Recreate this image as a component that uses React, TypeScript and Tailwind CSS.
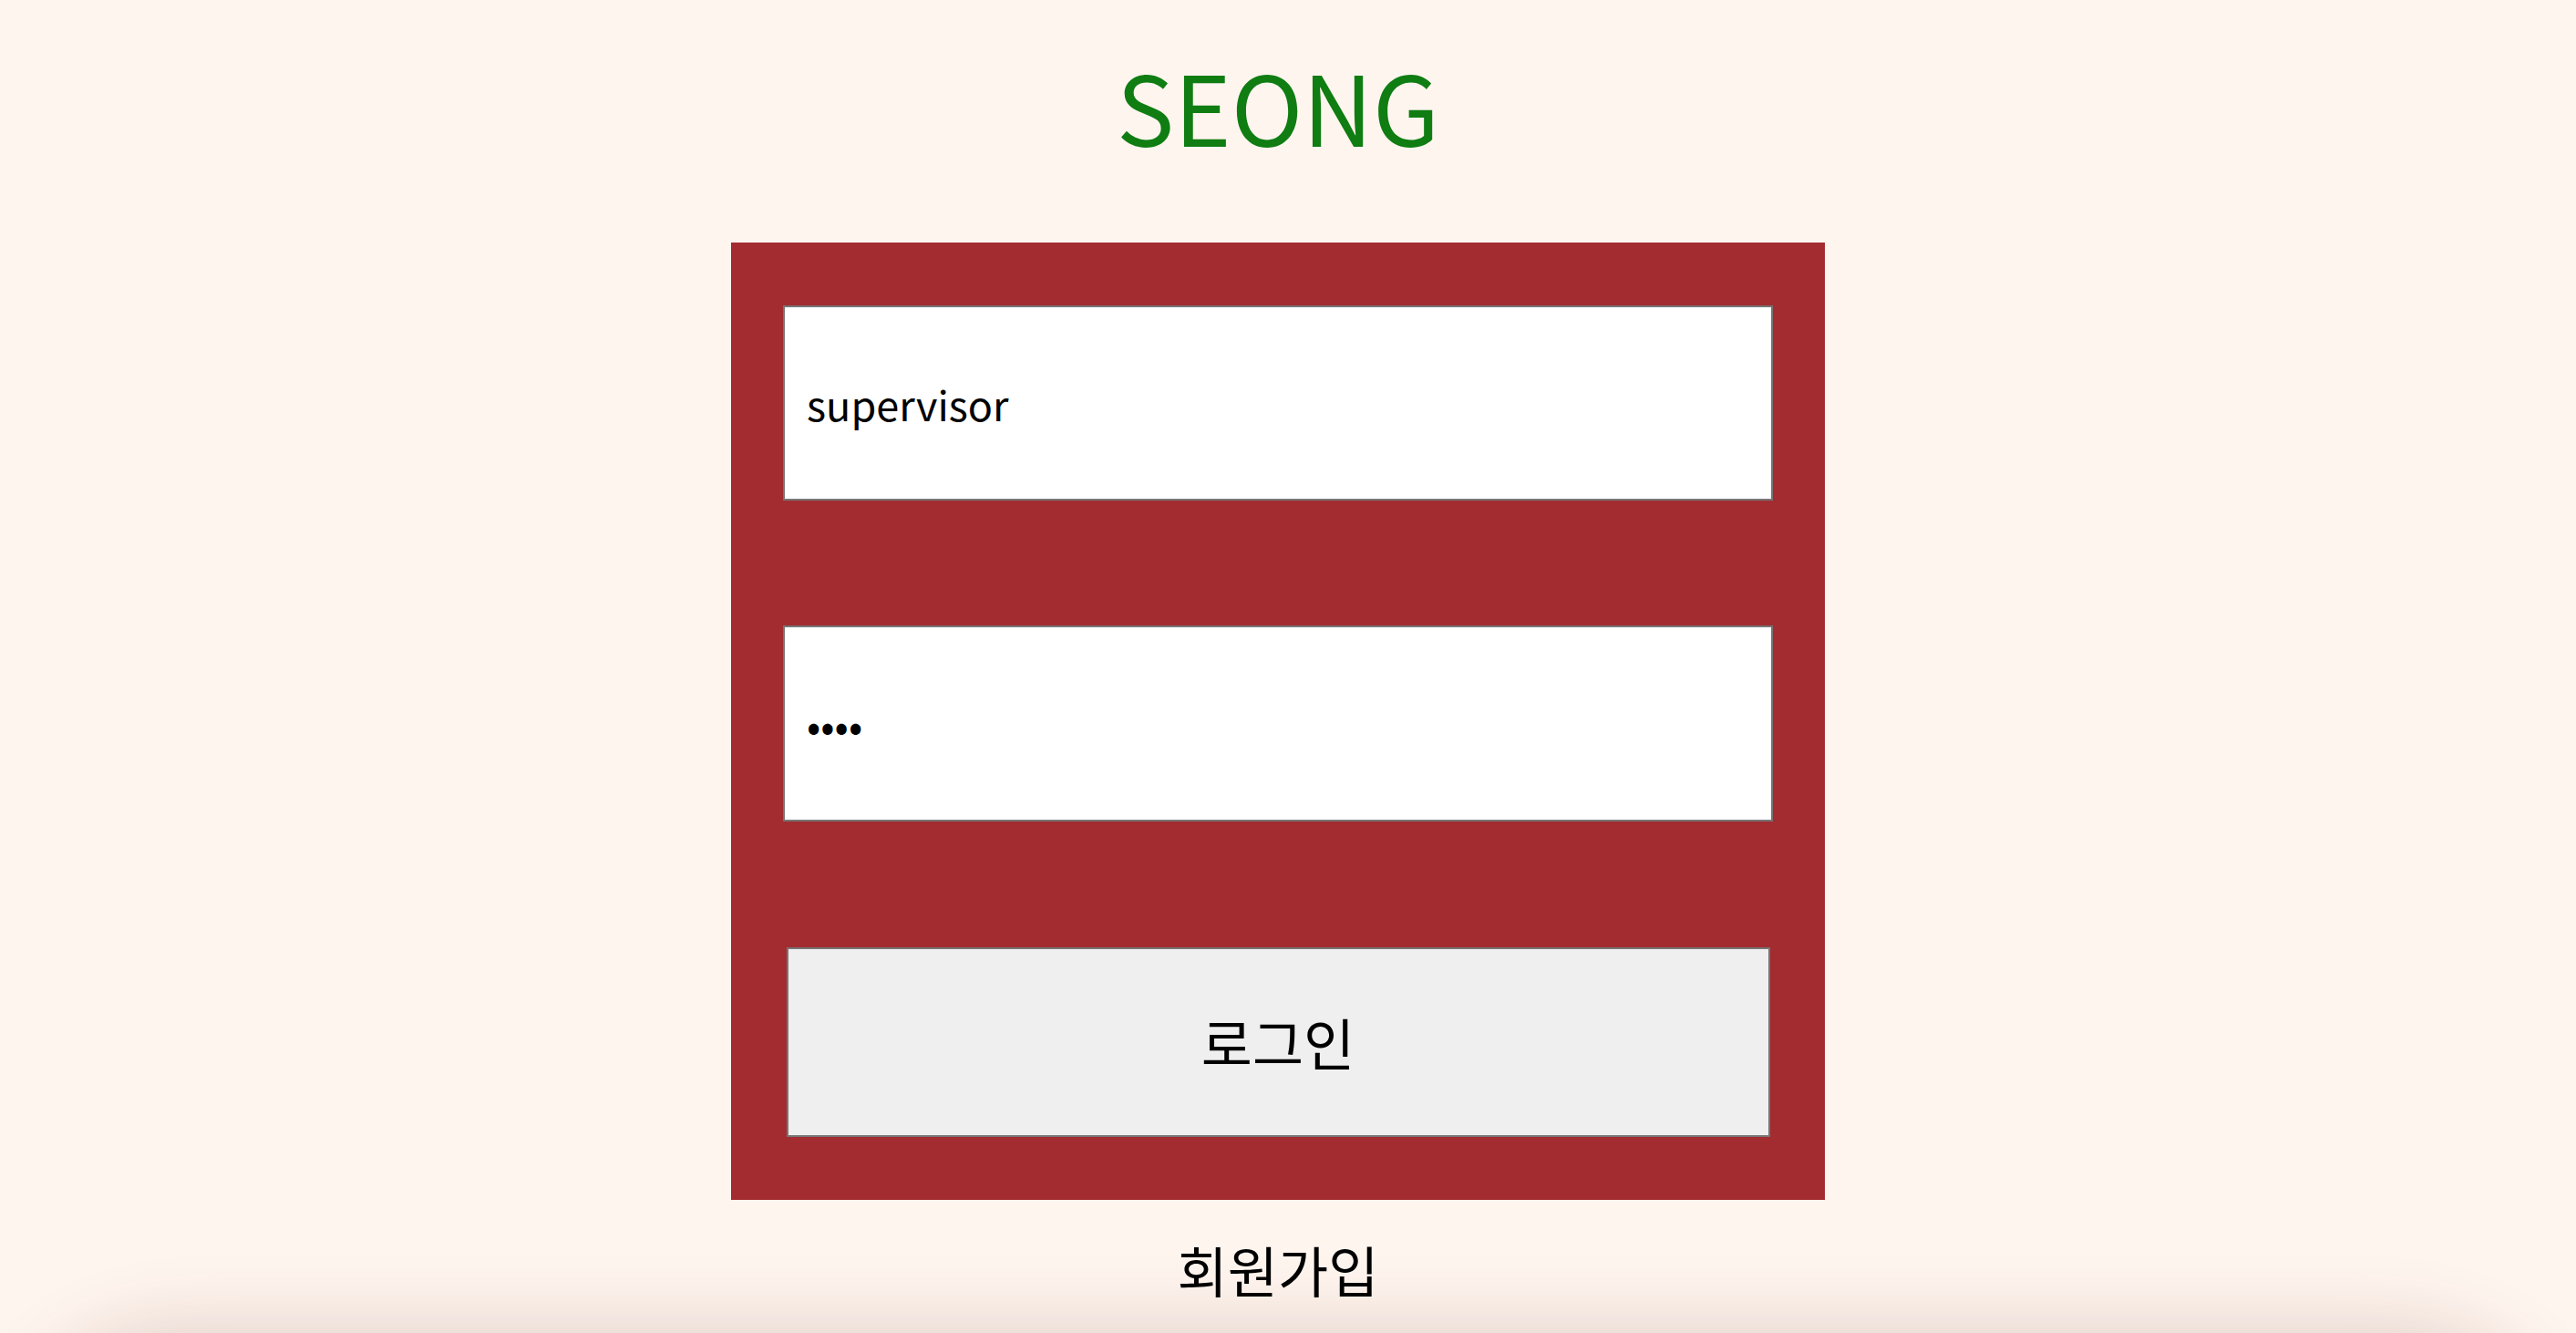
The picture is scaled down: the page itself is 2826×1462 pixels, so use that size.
import React from 'react'

export default function App() {
  return (
    <div
      className="relative min-h-screen overflow-hidden bg-[#fff5ef] pr-[22px]"
      style={{ fontFamily: '"Noto Sans CJK KR", "Noto Sans", sans-serif' }}
    >
      <div className="flex flex-col items-center">
        {/* Title */}
        <h1 className="mt-[62px] text-[106px] leading-none font-normal text-[#0f7d12]">SEONG</h1>

        {/* Login box */}
        <form className="mt-[98px] flex w-[1200px] flex-col items-center bg-[#a22c30] py-[69px]">
          <input
            type="text"
            readOnly
            defaultValue="supervisor"
            className="h-[214px] w-[1086px] border-2 border-[#767676] bg-white pl-[24px] text-[45px] text-black outline-none"
          />
          <input
            type="password"
            readOnly
            defaultValue="1234"
            className="mt-[137px] h-[215px] w-[1086px] border-2 border-[#767676] bg-white pl-[24px] text-[45px] text-black outline-none"
          />
          <button
            type="button"
            className="mt-[138px] h-[208px] w-[1079px] border-2 border-[#767676] bg-[#efefef] text-[61px] text-black"
          >
            로그인
          </button>
        </form>

        {/* Sign up link */}
        <a className="mt-[46px] text-[60px] leading-none text-black">회원가입</a>
      </div>

      {/* Bottom shadow from the element below the fold */}
      <div className="pointer-events-none absolute left-0 right-0 top-full h-[400px] rounded-[200px] shadow-[0_0_80px_10px_rgba(80,40,20,0.16)]" />
    </div>
  )
}
